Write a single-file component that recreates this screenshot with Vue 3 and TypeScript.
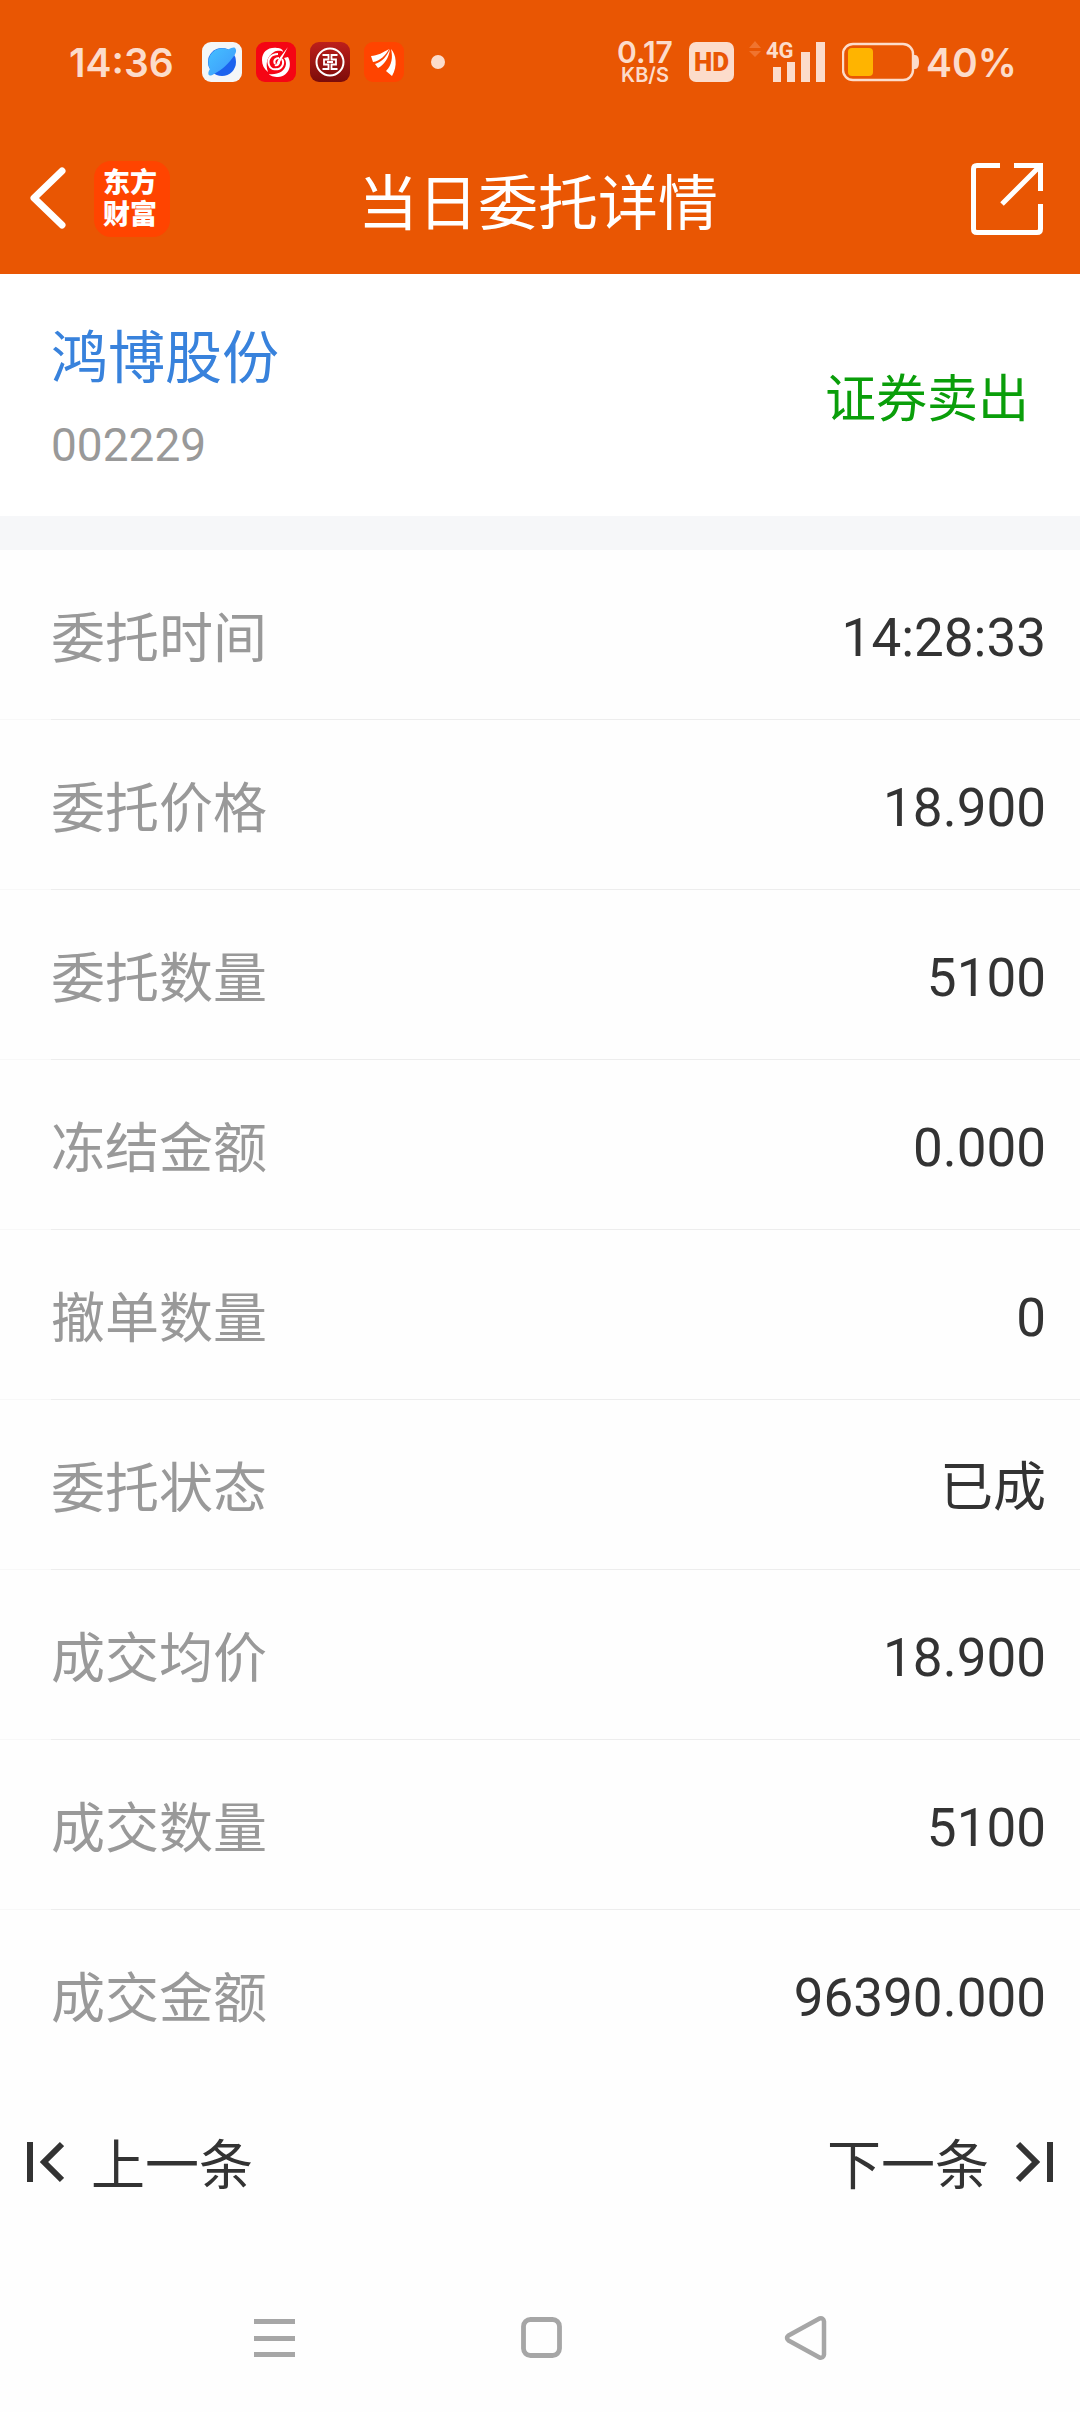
<script setup lang="ts">
interface Field {
  label: string
  value: string
}

const stock = { name: '鸿博股份', code: '002229', side: '证券卖出' }

const fields: Field[] = [
  { label: '委托时间', value: '14:28:33' },
  { label: '委托价格', value: '18.900' },
  { label: '委托数量', value: '5100' },
  { label: '冻结金额', value: '0.000' },
  { label: '撤单数量', value: '0' },
  { label: '委托状态', value: '已成' },
  { label: '成交均价', value: '18.900' },
  { label: '成交数量', value: '5100' },
  { label: '成交金额', value: '96390.000' },
]
</script>

<template>
  <div class="page">
    <div class="top">
      <div class="status">
        <span class="clock">14:36</span>
        <div class="apps">
          <svg width="40" height="40" viewBox="0 0 40 40" aria-hidden="true">
            <defs>
              <linearGradient id="planet" x1="0" y1="0" x2="1" y2="1">
                <stop offset="0" stop-color="#45c0ff" />
                <stop offset="1" stop-color="#3d97fb" />
              </linearGradient>
            </defs>
            <rect width="40" height="40" rx="9" fill="#f4f6f8" />
            <circle cx="20" cy="20" r="14" fill="#1c62ee" />
            <path d="M33 6C35 8 34 11 32 14C27 21 20 28 12 32C9 34 7 34 6.500 32.500C6 31 6.500 29 8 27A14 14 0 0 1 26 7.500C29 6 32 5 33 6Z" fill="url(#planet)" />
          </svg>
          <svg width="40" height="40" viewBox="0 0 40 40" aria-hidden="true">
            <rect width="40" height="40" rx="9" fill="#f50514" />
            <path d="M21 6C12 5 6 10 6 18C6 23 8 27 12 30C9 22 11 14 18 10C22 8 26 9 27 10C27 7 24 6 21 6Z" fill="#fff" />
            <path d="M32 15C36 22 34 34 22 35C18 35 14 34 13 32C21 33 29 30 30 22C30 19 29 17 28 16Z" fill="#fff" />
            <path d="M22 12C15 12 11 17 13 23C14 26 17 28 20 27M26 17C29 22 25 28 20 27M19 22C17 18 20 16 23 16M23 19C24 22 21 24 19 23" fill="none" stroke="#fff" stroke-width="2" />
            <path d="M32 5L22 18L20 23L24 20Z" fill="#fff" />
          </svg>
          <svg width="40" height="40" viewBox="0 0 40 40" aria-hidden="true">
            <defs>
              <linearGradient id="bank" x1="0" y1="0" x2="0" y2="1">
                <stop offset="0" stop-color="#bd1f1b" />
                <stop offset="1" stop-color="#7c0c0a" />
              </linearGradient>
            </defs>
            <rect width="40" height="40" rx="9" fill="url(#bank)" />
            <circle cx="20" cy="20" r="13.500" fill="none" stroke="#fff" stroke-width="2" />
            <path d="M12.500 13H18.500V17.500H14V22.500H18.500V27H12.500M27.500 13H21.500V17.500H26V22.500H21.500V27H27.500M17 20H23" fill="none" stroke="#fff" stroke-width="1.800" />
          </svg>
          <svg width="40" height="40" viewBox="0 0 40 40" aria-hidden="true">
            <rect width="40" height="40" rx="9" fill="#ff4400" />
            <path d="M7 14C13 14 20 10 25 7C22 13 16 19 9 20Z" fill="#fff" />
            <path d="M26 7C25 16 20 23 14 26L11 22C18 20 23 14 26 7Z" fill="#fff" />
            <path d="M27 7C32 12 34 24 28 34L22 29C28 23 29 15 27 7Z" fill="#fff" />
          </svg>
        </div>
        <span class="dot"></span>
        <div class="speed">
          <span class="rate">0.17</span>
          <span class="unit">KB/S</span>
        </div>
        <span class="hd">HD</span>
        <svg class="signal" width="76" height="42" viewBox="0 0 76 42" role="img" aria-label="4G">
          <path d="M0 7L6 0L12 7ZM0 10L6 16L12 10Z" fill="#f0742f" />
          <text x="17" y="17" class="net">4G</text>
          <path d="M24 26h8v15h-8zM38 21h8v20h-8zM52 11h9v30h-9zM67 1h9v40h-9z" fill="#fcdccb" />
        </svg>
        <svg class="battery" width="78" height="40" viewBox="0 0 78 40" aria-hidden="true">
          <rect x="1" y="2" width="70" height="36" rx="10" fill="none" stroke="#fcdccb" stroke-width="2.400" />
          <path d="M72 13H73C76 13 77 16 77 20S76 27 73 27H72Z" fill="#fcdccb" />
          <rect x="6" y="6" width="25" height="28" rx="4" fill="#ffb400" />
        </svg>
        <span class="percent">40%</span>
      </div>
      <header class="bar">
        <div class="side">
          <button type="button" aria-label="返回">
            <svg width="38" height="64" viewBox="0 0 38 64">
              <path d="M33 4L5 31L33 58" fill="none" stroke="#fff" stroke-width="7" stroke-linecap="round" stroke-linejoin="round" />
            </svg>
          </button>
          <span class="brand">东方<br />财富</span>
        </div>
        <h1>当日委托详情</h1>
        <div class="side end">
          <button type="button" aria-label="分享">
            <svg width="72" height="72" viewBox="0 0 72 72">
              <path d="M29 2.500H6Q2.500 2.500 2.500 6V66Q2.500 69.500 6 69.500H66Q69.500 69.500 69.500 66V41" fill="none" stroke="#fff" stroke-width="5" />
              <path d="M43 2.500H69.500V28M69 3L31 41" fill="none" stroke="#fff" stroke-width="5" />
            </svg>
          </button>
        </div>
      </header>
    </div>

    <main>
      <section class="stock">
        <div class="identity">
          <a href="#" class="name">{{ stock.name }}</a>
          <p class="code">{{ stock.code }}</p>
        </div>
        <strong class="sell">{{ stock.side }}</strong>
      </section>

      <dl class="fields">
        <div v-for="field in fields" :key="field.label" class="row">
          <dt>{{ field.label }}</dt>
          <dd>{{ field.value }}</dd>
        </div>
      </dl>

      <nav class="pager">
        <button type="button">
          <svg width="38" height="42" viewBox="0 0 38 42" aria-hidden="true">
            <path d="M4 1V41M36 3L18 21L36 39" fill="none" stroke="#333" stroke-width="6" />
          </svg>
          上一条
        </button>
        <button type="button">
          下一条
          <svg width="38" height="42" viewBox="0 0 38 42" aria-hidden="true">
            <path d="M34 1V41M2 3L20 21L2 39" fill="none" stroke="#333" stroke-width="6" />
          </svg>
        </button>
      </nav>
    </main>

    <footer class="system">
      <button type="button" aria-label="最近任务">
        <svg width="44" height="46" viewBox="0 0 44 46">
          <path d="M2 4h41v5H2zM2 21h41v5H2zM2 37h41v5H2z" fill="#a6a6a6" />
        </svg>
      </button>
      <button type="button" aria-label="主屏幕">
        <svg width="44" height="46" viewBox="0 0 44 46">
          <rect x="5.500" y="4.500" width="36" height="36" rx="7" fill="none" stroke="#a6a6a6" stroke-width="4.800" />
        </svg>
      </button>
      <button type="button" aria-label="返回上级">
        <svg width="44" height="46" viewBox="0 0 44 46">
          <path d="M35.500 3.500L4.500 20.500Q1.500 23 4.500 25.500L35.500 42.500Q39.500 43.500 40 39.500V6.500Q39.500 2.500 35.500 3.500Z" fill="none" stroke="#a6a6a6" stroke-width="4.500" stroke-linejoin="round" />
        </svg>
      </button>
    </footer>
  </div>
</template>

<style>
body {
  background: #fefefe;
}
</style>

<style scoped>
.page {
  display: flex;
  flex-direction: column;
  min-height: 100vh;
  font-family: "Noto Sans CJK SC", sans-serif;
  color: #333;
}

h1,
p,
dl,
dd {
  margin: 0;
}

button {
  padding: 0;
  border: 0;
  background: none;
  color: inherit;
  font: inherit;
}

svg {
  display: block;
  flex: none;
}

.top {
  background: #e95603;
  color: #fff;
}

.status {
  display: flex;
  align-items: center;
  height: 124px;
  padding: 0 66px 0 69px;
  color: #fcdccb;
  font-family: Inter, Roboto, sans-serif;
  font-weight: 600;
}

.clock,
.percent {
  padding-top: 2px;
  font-size: 39px;
  line-height: 48px;
}

.clock {
  width: 133px;
}

.apps {
  display: flex;
  gap: 14px;
}

.dot {
  width: 14px;
  height: 14px;
  margin-left: 27px;
  border-radius: 50%;
  background: #fcdccb;
}

.speed {
  display: flex;
  flex-direction: column;
  align-items: center;
  width: 56px;
  margin-left: auto;
}

.rate {
  font-size: 30px;
  line-height: 26px;
}

.unit {
  font-size: 20px;
  line-height: 20px;
}

.hd {
  width: 45px;
  height: 40px;
  margin-left: 16px;
  border-radius: 7px;
  background: #fcdccb;
  color: #e95603;
  font-family: Roboto, sans-serif;
  font-size: 26px;
  font-weight: 900;
  line-height: 41px;
  text-align: center;
}

.signal {
  margin-left: 15px;
  overflow: visible;
}

.net {
  fill: #fcdccb;
  font-family: Roboto, sans-serif;
  font-size: 22px;
  font-weight: 700;
}

.battery {
  margin-left: 17px;
}

.percent {
  width: 88px;
  margin-left: 6px;
}

.bar {
  display: flex;
  align-items: center;
  height: 150px;
  padding: 0 29px;
}

.side {
  display: flex;
  flex: 1;
  align-items: center;
  box-sizing: border-box;
  gap: 27px;
}

.end {
  justify-content: flex-end;
  padding-right: 8px;
}

.brand {
  box-sizing: border-box;
  width: 76px;
  height: 76px;
  padding: 4px 4px 0 0;
  border-radius: 17px;
  background: #ff4400;
  font-size: 27px;
  font-weight: 900;
  line-height: 32px;
  text-align: center;
}

h1 {
  padding-left: 4px;
  font-size: 60px;
  font-weight: 400;
  line-height: 72px;
}

.stock {
  display: flex;
  align-items: center;
  justify-content: space-between;
  box-sizing: border-box;
  height: 276px;
  padding: 0 51px;
  border-bottom: 34px solid #f6f7f9;
  background: #fff;
}

.identity {
  padding-top: 8px;
}

.name {
  display: block;
  color: #3882dc;
  font-size: 57px;
  line-height: 84px;
  text-decoration: none;
}

.code {
  margin-top: 8px;
  color: #999;
  font-family: Roboto, sans-serif;
  font-size: 46px;
  line-height: 84px;
}

.sell {
  color: #0a9e0a;
  font-size: 51px;
  font-weight: 400;
  line-height: 72px;
}

.row {
  display: flex;
  align-items: center;
  justify-content: space-between;
  box-sizing: border-box;
  height: 170px;
  padding: 0 34px 0 51px;
  background:
    linear-gradient(#ededed, #ededed) 51px 100% / 100% 1px no-repeat,
    linear-gradient(#f8f8f8, #f8f8f8) 0 100% / 51px 1px no-repeat;
  line-height: 80px;
}

.row:last-child {
  background: none;
}

dt {
  color: #999;
  font-size: 54px;
}

dd {
  padding-top: 6px;
  font-family: Roboto, "Noto Sans CJK SC", sans-serif;
  font-size: 53px;
}

.pager {
  display: flex;
  align-items: center;
  justify-content: space-between;
  height: 164px;
  padding: 0 26px;
  font-size: 54px;
  line-height: 80px;
}

.pager button {
  display: flex;
  align-items: center;
  gap: 27px;
}

.system {
  display: flex;
  align-items: center;
  justify-content: center;
  gap: 222px;
  height: 148px;
  margin-top: auto;
}
</style>
